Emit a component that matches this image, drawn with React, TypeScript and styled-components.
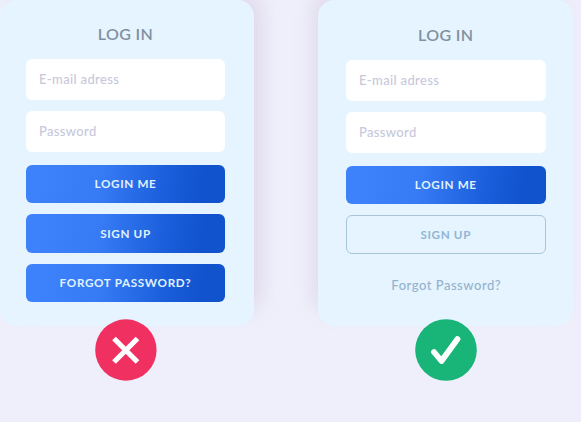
import React from 'react';
import styled, { createGlobalStyle, css } from 'styled-components';

const GlobalStyle = createGlobalStyle`
  * { box-sizing: border-box; }
  body { margin: 0; background: #efeffb; overflow: hidden; }
`;

const Page = styled.main`
  display: flex;
  justify-content: space-between;
  width: 581px;
  height: 422px;
  padding-right: 8px;
  overflow: hidden;
  background: #efeffb;
  font-family: Lato, 'Open Sans', sans-serif;
`;

const Example = styled.section`
  display: flex;
  flex-direction: column;
  align-items: center;
  width: 254px;
  &:last-child { width: 255px; }
`;

const Card = styled.form<{ $shadow: 'left' | 'right' }>`
  display: flex;
  flex-direction: column;
  width: 100%;
  height: 326px;
  padding: ${p => (p.$shadow === 'right' ? '25px 29px 0 26px' : '26px 27.5px 0 28px')};
  border-radius: 16px;
  background: #e5f4fe;
  box-shadow: ${p => (p.$shadow === 'right' ? '11px' : '-8px')} -11px 22px -6px rgba(150, 110, 150, 0.2);
`;

const Title = styled.h1`
  margin: 0 0 16px;
  color: #80909f;
  font-size: 16px;
  font-weight: 600;
  line-height: 18px;
  letter-spacing: 0.4px;
  text-align: center;
`;

const Field = styled.input`
  flex: none;
  width: 100%;
  height: 41px;
  margin-bottom: 11px;
  padding: 0 13px 1px;
  border: 0;
  border-radius: 6px;
  outline: 0;
  background: #fff;
  font: 500 13px/20px Lato, sans-serif;
  letter-spacing: 0.35px;
  &::placeholder { color: #c7c8db; opacity: 1; }
`;

const Actions = styled.div`
  display: flex;
  flex-direction: column;
  gap: 11px;
  padding-top: 1.5px;
`;

const Button = styled.button<{ $kind?: 'outline' | 'link' }>`
  height: 38.5px;
  padding: 0 0 1px;
  border: 0;
  border-radius: 6px;
  color: #e0f2ff;
  background: linear-gradient(98deg, #3d82fb 8%, #367af4 38%, #1b5edb 70%, #1153cd 88%);
  font: 700 11.7px/16px Lato, sans-serif;
  letter-spacing: 0.65px;
  ${p => p.$kind === 'outline' && css`
    border: 1px solid #a9c5d9;
    background: transparent;
    color: #91b6d6;
  `}
  ${p => p.$kind === 'link' && css`
    padding: 2px 0 0 1px;
    background: transparent;
    color: #94b3ce;
    font-size: 13px;
    font-weight: 500;
    letter-spacing: 0.52px;
  `}
`;

const Mark = styled.svg`
  z-index: 1;
  flex: none;
  width: 62px;
  height: 62px;
  margin-top: -7px;
  overflow: visible;
`;

function Fields() {
  return (
    <>
      <Title>LOG IN</Title>
      <Field type="email" placeholder="E-mail adress" aria-label="Email" />
      <Field type="password" placeholder="Password" aria-label="Password" />
    </>
  );
}

export default function App() {
  return (
    <>
      <GlobalStyle />
      <Page>
        <Example>
          <Card $shadow="right">
            <Fields />
            <Actions>
              <Button type="button">LOGIN ME</Button>
              <Button type="button">SIGN UP</Button>
              <Button type="button">FORGOT PASSWORD?</Button>
            </Actions>
          </Card>
          <Mark viewBox="0 0 62 62">
            <circle cx="29.9" cy="31" r="30.7" fill="#ef3060" />
            <path d="M18 19.5 41.5 43M41.5 19.5 18 43" fill="none" stroke="#fff" strokeWidth="5.2" />
          </Mark>
        </Example>
        <Example>
          <Card $shadow="left">
            <Fields />
            <Actions>
              <Button type="button">LOGIN ME</Button>
              <Button type="button" $kind="outline">SIGN UP</Button>
              <Button type="button" $kind="link">Forgot Password?</Button>
            </Actions>
          </Card>
          <Mark viewBox="0 0 62 62">
            <circle cx="31" cy="31" r="30.8" fill="#18b478" />
            <path d="M19 33 26.5 42 42.5 20" fill="none" stroke="#fff" strokeWidth="5.8" strokeLinecap="round" strokeLinejoin="round" />
          </Mark>
        </Example>
      </Page>
    </>
  );
}
